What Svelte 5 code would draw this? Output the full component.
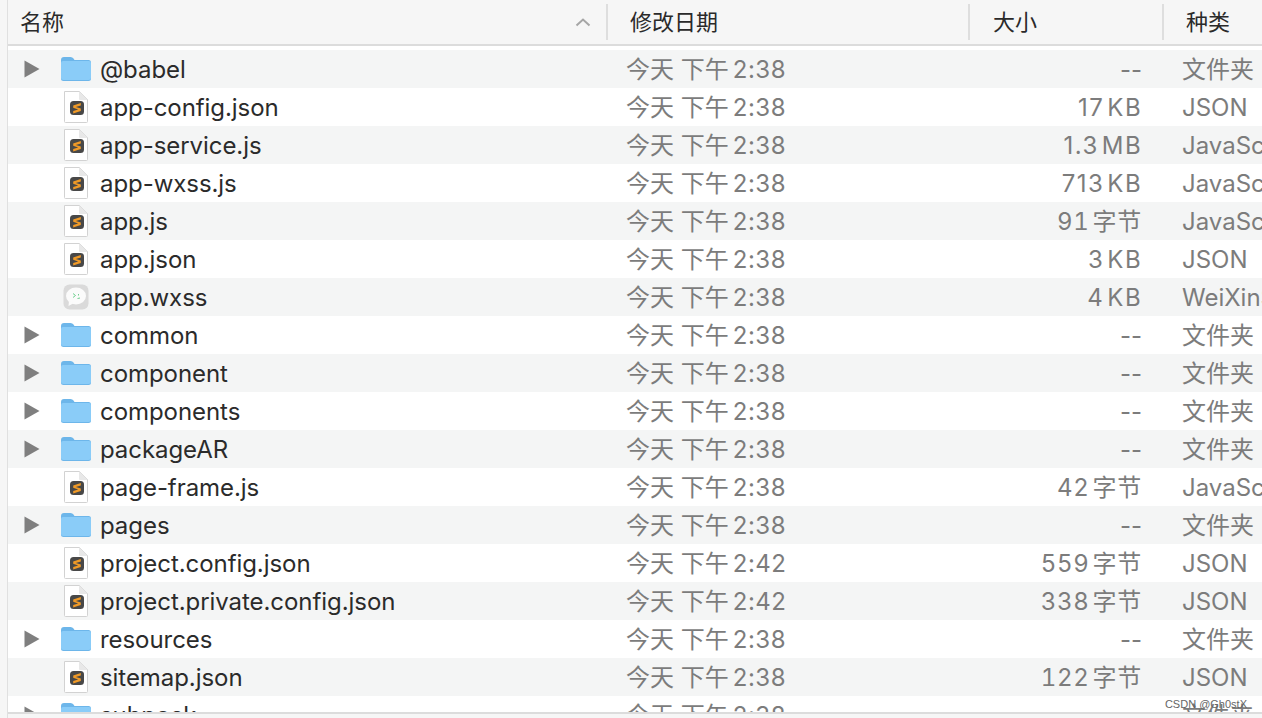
<script>
  const S = 'sublime', F = 'folder', W = 'wx';
  const today = '今天 下午', t38 = '2:38', t42 = '2:42';
  const rows = [
    { n: '@babel', i: F, t0: t38, s: '--', t: '文件夹' },
    { n: 'app-config.json', i: S, t0: t38, s: '17 KB', t: 'JSON' },
    { n: 'app-service.js', i: S, t0: t38, s: '1.3 MB', t: 'JavaScript' },
    { n: 'app-wxss.js', i: S, t0: t38, s: '713 KB', t: 'JavaScript' },
    { n: 'app.js', i: S, t0: t38, s: '91 字节', t: 'JavaScript' },
    { n: 'app.json', i: S, t0: t38, s: '3 KB', t: 'JSON' },
    { n: 'app.wxss', i: W, t0: t38, s: '4 KB', t: 'WeiXinStyle' },
    { n: 'common', i: F, t0: t38, s: '--', t: '文件夹' },
    { n: 'component', i: F, t0: t38, s: '--', t: '文件夹' },
    { n: 'components', i: F, t0: t38, s: '--', t: '文件夹' },
    { n: 'packageAR', i: F, t0: t38, s: '--', t: '文件夹' },
    { n: 'page-frame.js', i: S, t0: t38, s: '42 字节', t: 'JavaScript' },
    { n: 'pages', i: F, t0: t38, s: '--', t: '文件夹' },
    { n: 'project.config.json', i: S, t0: t42, s: '559 字节', t: 'JSON' },
    { n: 'project.private.config.json', i: S, t0: t42, s: '338 字节', t: 'JSON' },
    { n: 'resources', i: F, t0: t38, s: '--', t: '文件夹' },
    { n: 'sitemap.json', i: S, t0: t38, s: '122 字节', t: 'JSON' },
    { n: 'subpack', i: F, t0: t38, s: '--', t: '文件夹' }
  ];
</script>

<div class="window">
  <div class="gutter"></div>
  <div class="main">
    <header class="head">
      <div class="hc c-name">
        <span>名称</span>
        <svg class="chev" width="16" height="10" viewBox="0 0 16 10"><path d="M1.5 8.5 L8 2.5 L14.5 8.5" fill="none" stroke="#a6a6a6" stroke-width="2"/></svg>
      </div>
      <div class="hc c-date">修改日期</div>
      <div class="hc c-size">大小</div>
      <div class="hc c-type">种类</div>
    </header>
    <div class="list">
      {#each rows as r}
        <div class="row">
          <div class="disc">
            {#if r.i === F}
              <svg width="16" height="18" viewBox="0 0 16 18"><path d="M0.5 0.5 L15.5 9 L0.5 17.5 Z" fill="#7f7f7f"/></svg>
            {/if}
          </div>
          <div class="icon">
            {#if r.i === F}
              <svg width="32" height="26" viewBox="0 0 32 26">
                <path d="M1 4 Q1 1 4 1 H10.5 Q12.5 1 13.5 2.5 L14.5 4 H29 Q31 4 31 6.5 V22.5 Q31 25 28.5 25 H3.5 Q1 25 1 22.5 Z" fill="#6db6ea"/>
                <path d="M1 7 Q1 5 3 5 H29 Q31 5 31 7 V22 Q31 24 28.5 24 H3.5 Q1 24 1 22 Z" fill="#8accf8"/>
              </svg>
            {:else if r.i === S}
              <svg width="26" height="34" viewBox="0 0 26 34">
                <path d="M1.5 1.5 H16.5 L24.5 9.5 V31.5 Q24.5 32.5 23.5 32.5 H2.5 Q1.5 32.5 1.5 31.5 Z" fill="#fff" stroke="#d2d2d2"/>
                <path d="M16.5 1.5 V9.5 H24.5 Z" fill="#e8e8e8" stroke="#dcdcdc" stroke-width="0.5"/>
                <rect x="7" y="11" width="14" height="14" rx="3.5" fill="#484848"/>
                <path d="M17.8 13 V15.4 L12.8 17 L17.8 18.6 V21 L10.2 23.4 V21 L15.2 19.4 L10.2 17.8 V15.4 Z" fill="#f09a27"/>
              </svg>
            {:else}
              <svg width="26" height="26" viewBox="0 0 26 26">
                <rect x="0.5" y="0.5" width="25" height="25" rx="6" fill="#dadada"/>
                <ellipse cx="13" cy="12" rx="10" ry="8.5" fill="#fbfbfb"/>
                <path d="M6 17 L5.5 22 L11 19 Z" fill="#fbfbfb"/>
                <path d="M10 9.5 L12.5 11.5 L10 13.5" fill="none" stroke="#6fd08f" stroke-width="1"/>
                <path d="M15.5 10 V11.5 M14.5 14.5 L17 14" fill="none" stroke="#6fd08f" stroke-width="1"/>
              </svg>
            {/if}
          </div>
          <div class="name">{r.n}</div>
          <div class="date">{today}<span class="time">{r.t0}</span></div>
          <div class="size" class:bytes={r.s.includes('字节')} class:dash={r.s === '--'}>{r.s}</div>
          <div class="type">{r.t}</div>
        </div>
      {/each}
    </div>
    <div class="foot"></div>
  </div>
  <div class="mark">CSDN @Gh0stX</div>
</div>

<style>
  :global(body) { margin: 0; background: #fff; }
  .window {
    position: relative;
    display: flex;
    width: 1262px;
    height: 718px;
    overflow: hidden;
    font-family: Inter, "Noto Sans CJK SC", sans-serif;
  }
  .gutter {
    flex: 0 0 8px;
    background: #f6f6f6;
    border-right: 1px solid #e0e0e0;
    box-sizing: border-box;
  }
  .main { flex: 1; min-width: 0; display: flex; flex-direction: column; }
  .head {
    flex: 0 0 46px;
    box-sizing: border-box;
    display: flex;
    background: #f6f6f6;
    border-bottom: 2px solid #dcdcdc;
    padding-top: 4px;
    padding-bottom: 4px;
    font-size: 22px;
    line-height: 36px;
    color: #2a2a2a;
  }
  .hc {
    box-sizing: border-box;
    height: 36px;
    display: flex;
    align-items: center;
    border-right: 2px solid #dedede;
    white-space: nowrap;
  }
  .c-name { flex: 0 0 600px; padding-left: 12px; position: relative; }
  .chev { position: absolute; left: 567px; top: 13px; }
  .c-date { flex: 0 0 362px; padding-left: 22px; }
  .c-size { flex: 0 0 194px; padding-left: 23px; }
  .c-type { flex: 1; padding-left: 22px; border-right: 0; }
  .list {
    height: 666px;
    padding-top: 4px;
    box-sizing: border-box;
    overflow: hidden;
  }
  .row {
    height: 38px;
    line-height: 38px;
    display: flex;
    align-items: center;
    font-size: 24px;
    white-space: nowrap;
    overflow: hidden;
  }
  .row:nth-child(odd) { background: #f4f5f5; }
  .disc { flex: 0 0 48px; padding-left: 16px; box-sizing: border-box; display: flex; align-items: center; }
  .icon { flex: 0 0 40px; display: flex; justify-content: center; align-items: center; }
  .name, .date, .size, .type { padding-top: 2px; }
  .name { flex: 0 0 526px; margin-left: 4px; color: #2b2b2b; letter-spacing: -0.06px; }
  .date { flex: 0 0 358px; color: #7c7c7c; }
  .time { margin-left: 4px; letter-spacing: 0.5px; }
  .size {
    flex: 0 0 158px;
    text-align: right;
    color: #7c7c7c;
    letter-spacing: 1.4px;
    word-spacing: -5px;
  }
  .size.bytes {
    letter-spacing: 0.7px;
    word-spacing: -4px;
    font-feature-settings: "tnum";
  }
  .size.dash { letter-spacing: 0; }
  .type { flex: 1; padding-left: 40px; color: #7c7c7c; overflow: hidden; }
  .foot { flex: 1; background: #f6f6f6; border-top: 2px solid #dcdcdc; }
  .mark {
    position: absolute;
    right: 15px;
    top: 698px;
    font-family: "Liberation Sans", sans-serif;
    font-size: 11px;
    color: #666;
    white-space: nowrap;
  }
</style>
